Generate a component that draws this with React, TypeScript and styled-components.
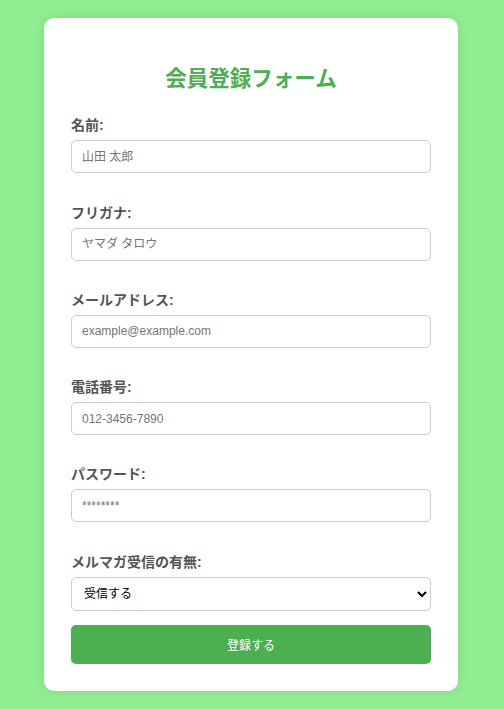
import styled, { createGlobalStyle } from "styled-components";

const GlobalStyle = createGlobalStyle`
  html, body {
    margin: 0;
    padding: 0;
  }
  body {
    font-family: "Liberation Sans", "Noto Sans CJK JP", sans-serif;
    background: #90ee90;
    color: #333;
  }
`;

const Page = styled.div`
  display: flex;
  min-height: 100vh;
  align-items: center;
  justify-content: center;
`;

const Card = styled.form`
  box-sizing: border-box;
  width: 414px;
  margin-right: 2px;
  background: #fff;
  border-radius: 10px;
  padding: 27px;
  box-shadow: 0 0 12px rgba(0, 0, 0, 0.1);
`;

const Title = styled.h2`
  margin: 22px 0 23px;
  text-align: center;
  color: #4caf50;
  font-size: 21.5px;
  line-height: 25px;
  font-weight: 700;
`;

const Group = styled.div<{ $last?: boolean }>`
  margin-bottom: ${({ $last }) => ($last ? "14px" : "29.25px")};
`;

const Label = styled.label`
  display: block;
  margin-bottom: 5px;
  color: #555;
  font-size: 14px;
  line-height: 20px;
  font-weight: 700;
`;

const Input = styled.input`
  display: block;
  box-sizing: border-box;
  width: 100%;
  height: 33px;
  padding: 0 10px;
  border: 1px solid #ccc;
  border-radius: 5px;
  font-family: inherit;
  font-size: 12px;
  color: #333;
  outline: none;

  &::placeholder {
    color: #757575;
  }
`;

const Select = styled.select`
  display: block;
  box-sizing: border-box;
  width: 100%;
  height: 34px;
  padding: 0 6px 0 8px;
  border: 1px solid #ccc;
  border-radius: 5px;
  background: #fff;
  font-family: inherit;
  font-size: 12px;
  color: #000;
`;

const SubmitButton = styled.button`
  display: block;
  width: 100%;
  height: 39px;
  border: none;
  border-radius: 5px;
  background: #4caf50;
  color: #fff;
  font-family: inherit;
  font-size: 12px;
  cursor: pointer;
`;

const fields = [
  { id: "name", label: "名前:", type: "text", placeholder: "山田 太郎" },
  { id: "kana", label: "フリガナ:", type: "text", placeholder: "ヤマダ タロウ" },
  { id: "email", label: "メールアドレス:", type: "email", placeholder: "example@example.com" },
  { id: "tel", label: "電話番号:", type: "tel", placeholder: "012-3456-7890" },
  { id: "password", label: "パスワード:", type: "password", placeholder: "********" },
];

export default function App() {
  return (
    <>
      <GlobalStyle />
      <Page>
        <Card onSubmit={(e) => e.preventDefault()}>
          <Title>会員登録フォーム</Title>
          {fields.map((f) => (
            <Group key={f.id}>
              <Label htmlFor={f.id}>{f.label}</Label>
              <Input id={f.id} type={f.type} placeholder={f.placeholder} />
            </Group>
          ))}
          <Group $last>
            <Label htmlFor="newsletter">メルマガ受信の有無:</Label>
            <Select id="newsletter" defaultValue="yes">
              <option value="yes">受信する</option>
              <option value="no">受信しない</option>
            </Select>
          </Group>
          <SubmitButton type="submit">登録する</SubmitButton>
        </Card>
      </Page>
    </>
  );
}
